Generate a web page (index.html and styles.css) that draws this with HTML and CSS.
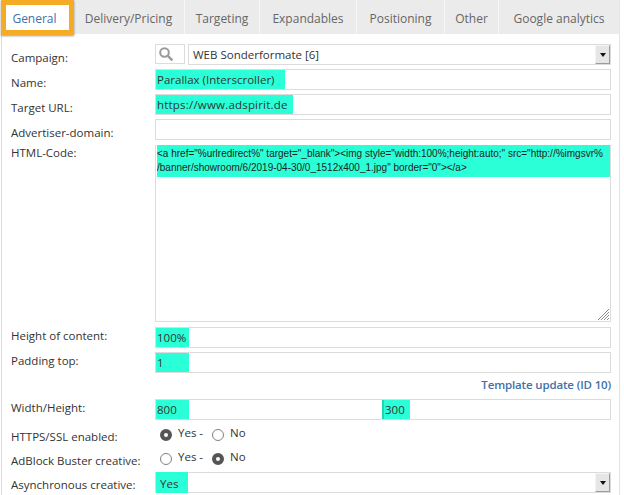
FILE: index.html
```html
<!DOCTYPE html>
<html>
<head>
  <title>Edit banner</title>
  <link rel="stylesheet" href="styles.css">
</head>
<body>
  <div class="panel">
    <ul class="tabs">
      <li class="active">General</li>
      <li class="t-delivery">Delivery/Pricing</li>
      <li class="t-targeting">Targeting</li>
      <li class="t-expand">Expandables</li>
      <li class="t-position">Positioning</li>
      <li class="t-other">Other</li>
      <li class="t-google">Google analytics</li>
    </ul>

    <div class="form">
      <div class="row">
        <label>Campaign:</label>
        <div class="field-group">
          <div class="search-box">
            <svg width="16" height="16" viewBox="0 0 16 16"><circle cx="6.5" cy="6.5" r="4.3" fill="none" stroke="#9a9a9a" stroke-width="2"/><path d="M9.8 9.8l4.6 4.6" stroke="#9a9a9a" stroke-width="2.4"/></svg>
          </div>
          <div class="input select-box">
            <span class="select-text">WEB Sonderformate [6]</span>
            <span class="arrow"></span>
          </div>
        </div>
      </div>
      <div class="row">
        <label>Name:</label>
        <div class="input"><span class="mark mark-name">Parallax (Interscroller)</span></div>
      </div>
      <div class="row">
        <label>Target URL:</label>
        <div class="input"><span class="mark mark-url">https://www.adspirit.de</span></div>
      </div>
      <div class="row">
        <label>Advertiser-domain:</label>
        <div class="input"></div>
      </div>
      <div class="row row-code">
        <label>HTML-Code:</label>
        <div class="textarea">
          <div class="code">&lt;a href="%urlredirect%" target="_blank"&gt;&lt;img style="width:100%;height:auto;" src="http://%imgsvr%<br>/banner/showroom/6/2019-04-30/0_1512x400_1.jpg" border="0"&gt;&lt;/a&gt;</div>
          <svg class="grip" width="13" height="13" viewBox="0 0 13 13"><path d="M1 12L12 1M4 12l8-8M7 12l5-5M10 12l2-2" stroke="#8a8a8a" stroke-width="1" fill="none"/></svg>
        </div>
      </div>
      <div class="row row-tight">
        <label>Height of content:</label>
        <div class="input"><span class="mark mark-short">100%</span></div>
      </div>
      <div class="row row-tight">
        <label>Padding top:</label>
        <div class="input"><span class="mark mark-short">1</span></div>
      </div>
      <div class="template-link">Template update (ID 10)</div>
      <div class="row row-tight">
        <label>Width/Height:</label>
        <div class="input input-pair">
          <span class="mark mark-short">800</span>
          <span class="mark mark-short mark-second">300</span>
        </div>
      </div>
      <div class="row row-radio">
        <label>HTTPS/SSL enabled:</label>
        <div class="radios">
          <span class="radio checked"></span><span class="radio-label">Yes -</span>
          <span class="radio"></span><span class="radio-label">No</span>
        </div>
      </div>
      <div class="row row-radio">
        <label>AdBlock Buster creative:</label>
        <div class="radios">
          <span class="radio"></span><span class="radio-label">Yes -</span>
          <span class="radio checked"></span><span class="radio-label">No</span>
        </div>
      </div>
      <div class="row row-async">
        <label>Asynchronous creative:</label>
        <div class="input select-box">
          <span class="mark mark-select">Yes</span>
          <span class="arrow"></span>
        </div>
      </div>
    </div>
  </div>
</body>
</html>
```

FILE: styles.css
```css
html, body {
  margin: 0;
  padding: 0;
  background-color: #ffffff;
  overflow: hidden;
}

body {
  font-family: "Open Sans", sans-serif;
  font-size: 11.5px;
  color: #333333;
}

.panel {
  width: 617px;
  height: 495px;
  margin-left: 1px;
  border-left: 1px solid #dcdcdc;
  border-right: 1px solid #e4e4e4;
  position: relative;
}

/* tabs */
.tabs {
  list-style-type: none;
  margin: 0;
  padding: 0;
  height: 34px;
  display: flex;
  background-color: #ebebeb;
  font-size: 12px;
}

.tabs li {
  box-sizing: border-box;
  line-height: 37px;
  text-align: center;
  color: #666666;
  border-right: 1px solid #f6f6f6;
}

.tabs li.active {
  width: 71px;
  padding-right: 6px;
  color: #3f71a8;
  background-color: #ffffff;
  border-right: 0;
  position: relative;
}

.tabs li.active::after {
  content: "";
  position: absolute;
  left: -1px;
  top: 0;
  right: -1px;
  bottom: -1px;
  border: 5px solid #f5ab26;
  box-shadow: 0 1px 2px rgba(0, 0, 0, 0.4);
  box-sizing: border-box;
}

.t-delivery { width: 112px; }
.t-targeting { width: 75px; }
.t-expand { width: 97px; }
.t-position { width: 88px; }
.t-other { width: 54px; }
.t-google { flex: 1; border-right: 0 !important; }

/* form */
.form {
  padding: 10px 8px 0 8px;
}

.row {
  display: flex;
  height: 21px;
  margin-bottom: 4px;
}

.row label {
  width: 145px;
  flex: none;
  padding-left: 1px;
  box-sizing: border-box;
  line-height: 27px;
  white-space: nowrap;
}

.input {
  box-sizing: border-box;
  flex: 1;
  height: 21px;
  border: 1px solid #dcdcdc;
  background-color: #ffffff;
  position: relative;
  line-height: 19px;
}

.field-group {
  flex: 1;
  display: flex;
  gap: 3px;
}

.search-box {
  box-sizing: border-box;
  width: 30px;
  height: 20px;
  border: 1px solid #dcdcdc;
  padding: 1px 0 0 2px;
}

.select-text {
  padding-left: 4px;
}

.arrow {
  position: absolute;
  right: 0;
  top: 0;
  bottom: 0;
  width: 15px;
  background-color: #e6e6e6;
  border: 1px solid;
  border-color: #f4f4f4 #9c9c9c #9c9c9c #f4f4f4;
  box-sizing: border-box;
}

.arrow::after {
  content: "";
  position: absolute;
  left: 4px;
  top: 7px;
  border-style: solid;
  border-width: 4px 3px 0 3px;
  border-color: #111111 transparent transparent transparent;
}

.mark {
  display: inline-block;
  height: 19px;
  padding-left: 1px;
  background-color: #2affd8;
  vertical-align: top;
  white-space: nowrap;
}

.mark-name { width: 128px; }
.mark-url { width: 136px; letter-spacing: 0.2px; }
.mark-short { width: 32px; }
.mark-select { width: 32px; padding-left: 4px; box-sizing: border-box; height: 21px; margin-top: -1px; line-height: 23px; }

.mark-second {
  position: absolute;
  left: 226px;
  top: 0;
  border-left: 2px solid #1fd6b4;
  width: 25px;
  padding-left: 1px;
}

.row-code {
  height: 177px;
  margin-top: 5px;
  margin-bottom: 5px;
}

.row-code label {
  line-height: 15px;
}

.row-tight label {
  line-height: 17px;
}

.row-async label {
  line-height: 25px;
}

.textarea {
  box-sizing: border-box;
  flex: 1;
  height: 177px;
  border: 1px solid #dcdcdc;
  border-top: 0;
  position: relative;
  padding-left: 1px;
}

.code {
  font-family: "Liberation Sans", Arial, sans-serif;
  font-size: 10px;
  line-height: 14px;
  height: 32px;
  padding-top: 2px;
  box-sizing: border-box;
  background-color: #2affd8;
  white-space: nowrap;
  overflow: hidden;
  color: #222222;
}

.grip {
  position: absolute;
  right: 0;
  bottom: 0;
}

.template-link {
  height: 26px;
  line-height: 23px;
  text-align: right;
  color: #3f71a8;
  font-weight: 600;
  letter-spacing: -0.15px;
  margin-top: -4px;
}

.row-radio {
  height: 20px;
  margin-bottom: 4px;
}

.row-radio label {
  line-height: 25px;
}

.radios {
  display: flex;
  align-items: center;
  height: 23px;
  margin-top: -1px;
  padding-left: 5px;
}

.radio {
  box-sizing: border-box;
  width: 12px;
  height: 12px;
  border-radius: 50%;
  border: 1px solid #808080;
  background-color: #ffffff;
}

.radio.checked {
  border: 4px solid #555555;
}

.radio-label {
  margin: 0 9px 0 6px;
  position: relative;
  top: -2px;
}
```
